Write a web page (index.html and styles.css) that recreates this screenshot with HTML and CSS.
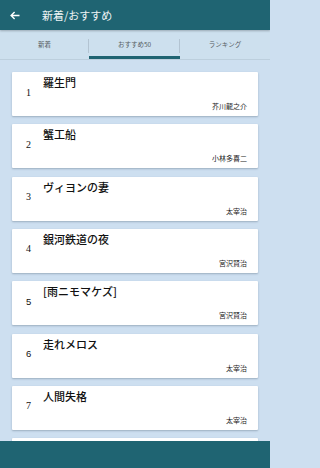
FILE: index.html
```html
<!DOCTYPE html>
<html lang="ja">
<head>
<meta charset="utf-8">
<link rel="stylesheet" href="styles.css">
</head>
<body>
<div class="app">
  <header class="appbar">
    <svg class="back" width="10" height="9" viewBox="0 0 10 9"><path d="M9.5 4.5H1.2M4.6 1L1.1 4.5 4.6 8" fill="none" stroke="#fff" stroke-width="1.4"/></svg>
    <span class="apptitle">新着/おすすめ</span>
  </header>
  <nav class="tabs">
    <div class="tab">新着</div>
    <div class="tab active">おすすめ50</div>
    <div class="tab">ランキング</div>
  </nav>
  <main class="list">
    <div class="card"><span class="num">1</span><div class="body"><span class="title">羅生門</span><span class="author">芥川龍之介</span></div></div>
    <div class="card"><span class="num">2</span><div class="body"><span class="title">蟹工船</span><span class="author">小林多喜二</span></div></div>
    <div class="card"><span class="num">3</span><div class="body"><span class="title">ヴィヨンの妻</span><span class="author">太宰治</span></div></div>
    <div class="card"><span class="num">4</span><div class="body"><span class="title">銀河鉄道の夜</span><span class="author">宮沢賢治</span></div></div>
    <div class="card"><span class="num sans">5</span><div class="body"><span class="title">[雨ニモマケズ]</span><span class="author">宮沢賢治</span></div></div>
    <div class="card"><span class="num sans">6</span><div class="body"><span class="title">走れメロス</span><span class="author">太宰治</span></div></div>
    <div class="card"><span class="num">7</span><div class="body"><span class="title">人間失格</span><span class="author">太宰治</span></div></div>
    <div class="card"></div>
  </main>
  <footer class="bottombar"></footer>
</div>
</body>
</html>
```
FILE: styles.css
```css
* { box-sizing: border-box; }
html, body { margin: 0; padding: 0; }
html { background: #cddff0; }
body {
  width: 270px;
  height: 468px;
  overflow: hidden;
  font-family: "Noto Sans CJK JP", "Noto Sans", sans-serif;
  background: #cddff0;
}
.app {
  display: flex;
  flex-direction: column;
  height: 468px;
}
.appbar {
  flex: 0 0 30px;
  background: #1f6472;
  display: flex;
  align-items: center;
  padding-left: 10px;
  box-shadow: 0 1px 2px rgba(0,0,0,0.25);
  position: relative;
  z-index: 2;
}
.back { display: block; margin-top: 1px; }
.apptitle {
  margin-left: 22px;
  color: #eef4f5;
  font-size: 11px;
  line-height: 14px;
}
.tabs {
  flex: 0 0 30px;
  display: grid;
  grid-template-columns: 89px 91px 1fr;
  background: #cde0ee;
  border-bottom: 1px solid #bccfdd;
}
.tab {
  position: relative;
  display: flex;
  align-items: center;
  justify-content: center;
  padding-bottom: 1px;
  font-size: 6.5px;
  color: #555c62;
}
.tab + .tab::before {
  content: "";
  position: absolute;
  left: -1px;
  top: 9px;
  height: 14px;
  border-left: 1px solid #b3c4d2;
}
.tab.active::after {
  content: "";
  position: absolute;
  left: 0;
  right: 0;
  bottom: 0;
  height: 3px;
  background: #1f6472;
}
.list {
  flex: 1;
  overflow: hidden;
  display: flex;
  flex-direction: column;
  gap: 8.33px;
  padding: 12px 12px 0 12px;
}
.card {
  flex: 0 0 44px;
  display: flex;
  align-items: center;
  background: #fff;
  border-radius: 1px;
  box-shadow: 0 1px 2px rgba(40,60,80,0.3);
  padding: 0 11px 0 14px;
}
.num {
  width: 17px;
  padding-bottom: 4px;
  font-family: "Liberation Serif", serif;
  font-size: 10px;
  color: #111;
}
.num.sans { font-family: "Liberation Sans", sans-serif; font-size: 9.5px; }
.body {
  flex: 1;
  align-self: stretch;
  display: flex;
  flex-direction: column;
  padding-top: 4px;
}
.title {
  font-size: 11px;
  line-height: 13px;
  font-weight: 500;
  color: #111;
}
.author {
  align-self: flex-end;
  margin-top: 12px;
  font-size: 7px;
  line-height: 10px;
  color: #1a1a1a;
}
.bottombar {
  flex: 0 0 27px;
  background: #1f6472;
  position: relative;
  z-index: 2;
}
```
